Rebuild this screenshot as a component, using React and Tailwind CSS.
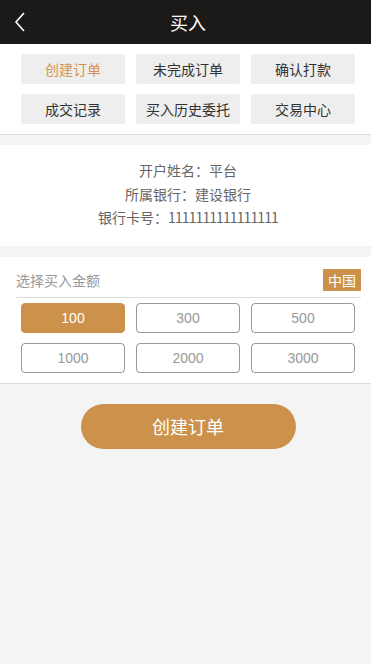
import { useState } from 'react';

const tabs = ['创建订单', '未完成订单', '确认打款', '成交记录', '买入历史委托', '交易中心'];
const amounts = [100, 300, 500, 1000, 2000, 3000];

export default function App() {
  const [selected, setSelected] = useState(100);

  return (
    <div className="min-h-screen w-full bg-[#f4f4f4] font-['Noto_Sans_CJK_SC',sans-serif]">
      {/* HEADER */}
      <div className="relative flex h-[44px] items-center justify-center bg-[#1c1a19] pl-[5px]">
        <button className="absolute left-[13px] top-[11px] text-white">
          <svg width="14" height="22" viewBox="0 0 14 22" fill="none">
            <path d="M11 2 L3 11 L11 20" stroke="white" strokeWidth="1.6" />
          </svg>
        </button>
        <h1 className="text-[18px] text-white">买入</h1>
      </div>

      {/* TABS */}
      <div className="grid grid-cols-3 gap-x-[11px] gap-y-[10px] border-b border-[#dddddd] bg-white pb-[10px] pl-[21px] pr-[16px] pt-[10px]">
        {tabs.map((t, i) => (
          <div
            key={t}
            className={`flex h-[30px] items-center justify-center rounded-[3px] bg-[#eeeeee] text-[14px] ${i === 0 ? 'text-[#d4944f]' : 'text-[#333333]'}`}
          >
            {t}
          </div>
        ))}
      </div>

      {/* BANK INFO */}
      <div className="mt-[10px] flex h-[101px] flex-col items-center justify-center bg-white pb-[2px] pl-[5px] text-[14px] leading-[23.5px] text-[#666666]">
        <p>开户姓名：平台</p>
        <p>所属银行：建设银行</p>
        <p>
          银行卡号：<span className="tracking-[-0.9px]">1111111111111111</span>
        </p>
      </div>

      {/* AMOUNT */}
      <div className="mt-[11px] border-b border-[#dddddd] bg-white pb-[10px]">
        <div className="ml-[16px] mr-[10px] flex h-[41px] items-center justify-between border-b border-[#dddddd] pt-[6px]">
          <span className="text-[14px] text-[#999999]">选择买入金额</span>
          <span className="flex h-[22px] w-[38px] items-center justify-center bg-[#cc924b] text-[14px] text-white">中国</span>
        </div>
        <div className="grid grid-cols-3 gap-x-[11px] gap-y-[10px] pl-[21px] pr-[16px] pt-[5px]">
          {amounts.map(a => (
            <button
              key={a}
              onClick={() => setSelected(a)}
              className={`flex h-[30px] items-center justify-center rounded-[4px] border font-['Liberation_Sans',sans-serif] text-[14px] ${selected === a ? 'border-[#cc924b] bg-[#cc924b] text-white' : 'border-[#999999] bg-white text-[#999999]'}`}
            >
              {a}
            </button>
          ))}
        </div>
      </div>

      {/* SUBMIT */}
      <div className="flex justify-center pl-[5px] pt-[20px]">
        <button className="h-[45px] w-[215px] rounded-full bg-[#cc924b] text-[18px] text-white">
          创建订单
        </button>
      </div>
    </div>
  );
}
